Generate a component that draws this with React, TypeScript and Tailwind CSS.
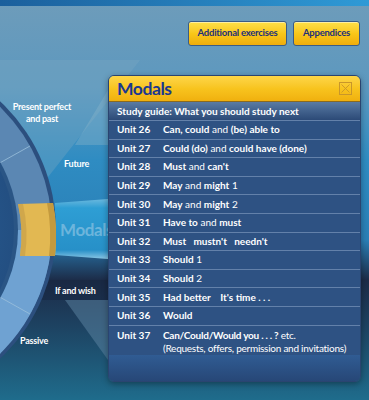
import React from 'react';

interface UnitRow {
  unit: string;
  title: React.ReactNode;
}

const B = ({ children }: { children: React.ReactNode }) => <span className="font-bold">{children}</span>;
const N = ({ children }: { children: React.ReactNode }) => <span className="font-normal">{children}</span>;

const units: UnitRow[] = [
  { unit: 'Unit 26', title: <><B>Can, could</B> <N>and</N> <B>(be) able to</B></> },
  { unit: 'Unit 27', title: <><B>Could (do)</B> <N>and</N> <B>could have (done)</B></> },
  { unit: 'Unit 28', title: <><B>Must</B> <N>and</N> <B>can't</B></> },
  { unit: 'Unit 29', title: <><B>May</B> <N>and</N> <B>might</B> <N>1</N></> },
  { unit: 'Unit 30', title: <><B>May</B> <N>and</N> <B>might</B> <N>2</N></> },
  { unit: 'Unit 31', title: <><B>Have to</B> <N>and</N> <B>must</B></> },
  { unit: 'Unit 32', title: <B>Must&nbsp;&nbsp;&nbsp;mustn't&nbsp;&nbsp;&nbsp;needn't</B> },
  { unit: 'Unit 33', title: <><B>Should</B> <N>1</N></> },
  { unit: 'Unit 34', title: <><B>Should</B> <N>2</N></> },
  { unit: 'Unit 35', title: <B>Had better&nbsp;&nbsp;&nbsp;&nbsp;It's time . . .</B> },
  { unit: 'Unit 36', title: <B>Would</B> },
];

function Backdrop() {
  return (
    <svg className="absolute inset-0" width="369" height="400" viewBox="0 0 369 400">
      <defs>
        <linearGradient id="bg" x1="0" y1="0" x2="0" y2="1">
          <stop offset="0" stopColor="#6e9cba" />
          <stop offset="0.22" stopColor="#5c98bf" />
          <stop offset="0.4" stopColor="#2f8cc2" />
          <stop offset="0.6" stopColor="#2a7fb6" />
          <stop offset="0.7" stopColor="#1c2c48" />
          <stop offset="0.8" stopColor="#1d3f5e" />
          <stop offset="1" stopColor="#1f6c8c" />
        </linearGradient>
        <linearGradient id="stripe" x1="0" y1="0" x2="1" y2="0">
          <stop offset="0" stopColor="#1b5f9c" />
          <stop offset="1" stopColor="#2f9ad6" />
        </linearGradient>
        <linearGradient id="beam" x1="0" y1="0" x2="0" y2="1">
          <stop offset="0" stopColor="#6ab8de" />
          <stop offset="0.15" stopColor="#2e9ed4" />
          <stop offset="0.85" stopColor="#2790c8" />
          <stop offset="1" stopColor="#8ac6e4" />
        </linearGradient>
        <radialGradient id="disc" cx="0.5" cy="0.5" r="0.5">
          <stop offset="0" stopColor="#2d6aa0" />
          <stop offset="1" stopColor="#234f82" />
        </radialGradient>
      </defs>
      <rect width="369" height="400" fill="url(#bg)" />
      <rect width="369" height="6" fill="url(#stripe)" />
      <polygon points="0,60 140,60 30,200 0,200" fill="#7aa8c4" opacity="0.35" />
      <polygon points="108,90 75,145 108,145" fill="#8fb8cc" opacity="0.35" />
      <polygon points="65,300 108,300 108,360" fill="#5e86a4" opacity="0.5" />
      <polygon points="0,280 108,280 108,300 0,300" fill="#16233c" opacity="0.4" />
      <polygon points="55,203 108,199 108,259 55,255" fill="url(#beam)" />
      <circle cx="-120" cy="230" r="176" fill="#2c4f7e" />
      <circle cx="-120" cy="230" r="172" fill="#5b87b3" />
      <path d="M -120 230 L 52 230 A 172 172 0 0 1 -30 377 Z" fill="#6fa2d2" />
      <line x1="-120" y1="230" x2="30" y2="146" stroke="#9cc0dc" strokeWidth="0.8" />
      <line x1="-120" y1="230" x2="30" y2="314" stroke="#9cc0dc" strokeWidth="0.8" />
      <path d="M 18 204 A 140 140 0 0 1 20 256 L 55 256 A 176 176 0 0 0 53 203 Z" fill="#e2b852" />
      <path d="M 47 203 L 53 203 A 176 176 0 0 1 55 256 L 49 256 A 170 170 0 0 0 47 203 Z" fill="#c49a3e" />
      <path d="M 18 204 L 23 204 A 140 140 0 0 1 25 256 L 20 256 A 140 140 0 0 0 18 204 Z" fill="#c9a048" opacity="0.7" />
      <circle cx="-120" cy="230" r="138" fill="#2a5585" />
      <circle cx="-120" cy="230" r="134" fill="url(#disc)" />
    </svg>
  );
}

export default function App() {
  return (
    <div className="relative w-[369px] h-[400px] overflow-hidden font-['Lato',sans-serif]">
      <Backdrop />

      <div className="absolute left-0 top-[101px] w-[84px] text-center text-white text-[9px] font-bold leading-[12px] tracking-tight">
        Present perfect<br />and past
      </div>
      <div className="absolute left-[64px] top-[157px] text-white text-[9px] font-bold tracking-tight">Future</div>
      <div className="absolute left-[60px] top-[217px] text-[#6db5dc] text-[17px] font-bold tracking-tight">Modals</div>
      <div className="absolute left-[55px] top-[284px] text-white text-[9px] font-bold tracking-tight">If and wish</div>
      <div className="absolute left-[20px] top-[334px] text-white text-[9px] font-bold tracking-tight">Passive</div>

      <div className="relative flex flex-col">
        <div className="flex justify-end gap-[6px] pt-[21px] pr-[9px]">
          <button className="h-[25px] w-[99px] rounded-[3px] border border-[#3b5c84] bg-gradient-to-b from-[#fde047] via-[#f9c718] to-[#efad0c] text-[#1d2f7a] text-[9.5px] font-bold tracking-tight shadow-[inset_0_1px_0_rgba(255,255,255,0.5)]">
            Additional exercises
          </button>
          <button className="h-[25px] w-[67px] rounded-[3px] border border-[#3b5c84] bg-gradient-to-b from-[#fde047] via-[#f9c718] to-[#efad0c] text-[#1d2f7a] text-[9.5px] font-bold tracking-tight shadow-[inset_0_1px_0_rgba(255,255,255,0.5)]">
            Appendices
          </button>
        </div>

        <div className="ml-[108px] mt-[29px] w-[253px] rounded-[6px] border border-[#2a4470] shadow-[0_2px_6px_rgba(0,0,0,0.35)] overflow-hidden">
          <div className="h-[26px] flex items-center justify-between pl-[8px] pr-[8px] bg-gradient-to-b from-[#fdd646] via-[#f8c41e] to-[#f0b00e] border-b border-[#8a6a20]">
            <span className="text-[#1b3890] text-[17.5px] font-bold tracking-tight leading-none">Modals</span>
            <svg width="13" height="13" viewBox="0 0 13 13">
              <rect x="0.5" y="0.5" width="12" height="12" fill="none" stroke="#c8962a" />
              <path d="M2.5 2.5 L10.5 10.5 M10.5 2.5 L2.5 10.5" stroke="#c8962a" strokeWidth="0.9" />
            </svg>
          </div>
          <div className="h-[18px] flex items-center pl-[8px] bg-gradient-to-b from-[#5a7ba4] to-[#2c4a77] text-white text-[10px] font-bold">
            Study guide: What you should study next
          </div>
          {units.map((u) => (
            <div key={u.unit} className="h-[18.6px] flex items-center border-t border-[#6381aa] bg-[#2e5283] text-white text-[10px]">
              <span className="w-[54px] pl-[8px] font-bold shrink-0">{u.unit}</span>
              <span>{u.title}</span>
            </div>
          ))}
          <div className="h-[30px] flex items-start pt-[3px] border-t border-[#6381aa] bg-[#2e5283] text-white text-[10px] leading-[13px]">
            <span className="w-[54px] pl-[8px] font-bold shrink-0">Unit 37</span>
            <span className="tracking-tight">
              <B>Can/Could/Would you . . . ?</B> <N>etc.</N>
              <br />
              <N>(Requests, offers, permission and invitations)</N>
            </span>
          </div>
          <div className="h-[26px] bg-gradient-to-b from-[#305c93] to-[#274777]" />
        </div>
      </div>
    </div>
  );
}
